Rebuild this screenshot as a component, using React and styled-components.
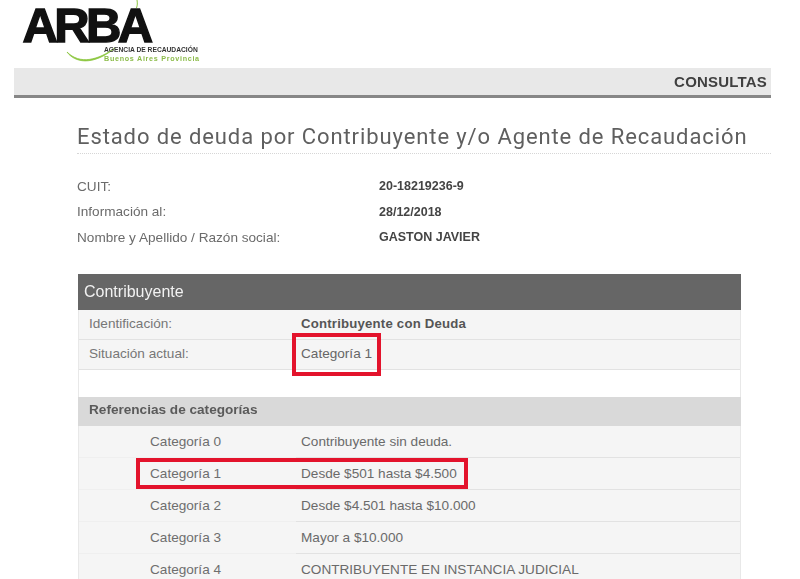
import styled, { createGlobalStyle } from 'styled-components'

const GlobalStyle = createGlobalStyle`
  html, body {
    margin: 0;
    background: #fff;
    font-family: "Liberation Sans", Arial, sans-serif;
    overflow: hidden;
  }
`

const META = [
  { label: 'CUIT:', value: '20-18219236-9' },
  { label: 'Información al:', value: '28/12/2018' },
  { label: 'Nombre y Apellido / Razón social:', value: 'GASTON JAVIER' },
]

const CATEGORIES = [
  { name: 'Categoría 0', text: 'Contribuyente sin deuda.' },
  { name: 'Categoría 1', text: 'Desde $501 hasta $4.500', marked: true },
  { name: 'Categoría 2', text: 'Desde $4.501 hasta $10.000' },
  { name: 'Categoría 3', text: 'Mayor a $10.000' },
  { name: 'Categoría 4', text: 'CONTRIBUYENTE EN INSTANCIA JUDICIAL' },
]

function App() {
  return (
    <Page>
      <GlobalStyle />
      <LogoArea>
        <LogoWord>ARBA</LogoWord>
        <Swoosh width="120" height="68" viewBox="0 0 120 68">
          <path d="M109 0 C 109.5 3, 109.5 5, 108.5 8" fill="none" stroke="#8cc63f" strokeWidth="1" />
          <path d="M39 52 C 46 62, 64 67, 87 48 C 70 60, 52 65, 39 52 Z" fill="#8cc63f" stroke="#8cc63f" strokeWidth="0.8" />
        </Swoosh>
        <LogoTag>
          <LogoDark>AGENCIA DE RECAUDACIÓN</LogoDark>
          <LogoGreen>Buenos Aires Provincia</LogoGreen>
        </LogoTag>
      </LogoArea>
      <TopBar>CONSULTAS</TopBar>
      <Content>
        <Title>Estado de deuda por Contribuyente y/o Agente de Recaudación</Title>
        <MetaList>
          {META.map((row) => (
            <MetaRow key={row.label}>
              <MetaLabel>{row.label}</MetaLabel>
              <MetaValue>{row.value}</MetaValue>
            </MetaRow>
          ))}
        </MetaList>
        <Table>
          <TableHead>Contribuyente</TableHead>
          <InfoRow>
            <InfoLabel>Identificación:</InfoLabel>
            <InfoValue $bold>Contribuyente con Deuda</InfoValue>
          </InfoRow>
          <InfoRow>
            <InfoLabel>Situación actual:</InfoLabel>
            <InfoValue>Categoría 1</InfoValue>
            <SituationMark />
          </InfoRow>
          <Spacer />
          <SubHead>Referencias de categorías</SubHead>
          {CATEGORIES.map((cat) => (
            <CategoryRow key={cat.name}>
              <CategoryName>{cat.name}</CategoryName>
              <CategoryText>{cat.text}</CategoryText>
              {cat.marked && <CategoryMark />}
            </CategoryRow>
          ))}
        </Table>
      </Content>
    </Page>
  )
}

export default App

const Page = styled.div`
  width: 800px;
  height: 579px;
  overflow: hidden;
  padding-left: 14px;
  box-sizing: border-box;
  filter: blur(0.45px);
`

const LogoArea = styled.div`
  position: relative;
  height: 68px;
`

const LogoWord = styled.div`
  position: absolute;
  left: 8.5px;
  top: 5px;
  font-size: 49px;
  line-height: 40px;
  font-weight: 700;
  letter-spacing: -3.6px;
  padding-right: 6px;
  color: #111;
  -webkit-text-stroke: 1.4px #111;
`

const Swoosh = styled.svg`
  position: absolute;
  left: 14px;
  top: 0;
`

const LogoTag = styled.div`
  position: absolute;
  left: 90px;
  top: 45.5px;
  display: flex;
  flex-direction: column;
  gap: 2.5px;
  line-height: 7px;
  font-weight: 700;
`

const LogoDark = styled.span`
  font-size: 6.7px;
  color: #333;
  white-space: nowrap;
`

const LogoGreen = styled.span`
  color: #8cbc4a;
  font-size: 7.2px;
  letter-spacing: 0.7px;
  white-space: nowrap;
`

const TopBar = styled.div`
  width: 753px;
  height: 27px;
  padding-right: 4px;
  background: #e8e8e8;
  border-bottom: 3px solid #878787;
  text-align: right;
  font-size: 15px;
  font-weight: 700;
  line-height: 28px;
  color: #3f3f3f;
  letter-spacing: 0.2px;
`

const Content = styled.div`
  padding-left: 63px;
  width: 694px;
`

const Title = styled.h1`
  margin: 26px 0 0;
  padding-bottom: 3px;
  height: 26px;
  font-family: Roboto, sans-serif;
  font-size: 22px;
  line-height: 26px;
  font-weight: 400;
  letter-spacing: 0.9px;
  color: #5f5f5f;
  white-space: nowrap;
  border-bottom: 1px dotted #d6d6d6;
`

const MetaList = styled.div`
  margin-top: 23px;
  display: flex;
  flex-direction: column;
  gap: 7.5px;
`

const MetaRow = styled.div`
  display: grid;
  grid-template-columns: 302px 1fr;
  height: 18px;
  align-items: center;
`

const MetaLabel = styled.span`
  font-size: 13.6px;
  color: #6b6b6b;
`

const MetaValue = styled.span`
  font-size: 12.5px;
  font-weight: 700;
  color: #444;
`

const Table = styled.div`
  margin: 28px 0 0 1px;
  width: 663px;
  box-sizing: border-box;
  border-left: 1px solid #e8e8e8;
  border-right: 1px solid #e8e8e8;
`

const TableHead = styled.div`
  height: 36px;
  line-height: 35px;
  margin: 0 -1px;
  padding-left: 6px;
  background: #666;
  color: #f2f2f2;
  font-size: 16px;
`

const InfoRow = styled.div`
  position: relative;
  display: grid;
  grid-template-columns: 222px 1fr;
  height: 30px;
  padding-bottom: 2px;
  align-items: center;
  box-sizing: border-box;
  background: #f5f5f5;
  border-bottom: 1px solid #e2e2e2;
`

const InfoLabel = styled.span`
  padding-left: 10px;
  font-size: 13.6px;
  color: #777;
`

const InfoValue = styled.span`
  font-size: ${(p) => (p.$bold ? '13.2px' : '13.6px')};
  font-weight: ${(p) => (p.$bold ? 700 : 400)};
  color: ${(p) => (p.$bold ? '#555' : '#666')};
  ${(p) => p.$bold && 'letter-spacing: 0.2px;'}
`

const SituationMark = styled.div`
  position: absolute;
  left: 213px;
  top: -7px;
  width: 89px;
  height: 43px;
  box-sizing: border-box;
  border: 4.5px solid #e3132c;
`

const Spacer = styled.div`
  height: 27px;
  background: #fff;
`

const SubHead = styled.div`
  height: 29px;
  line-height: 26px;
  margin: 0 -1px;
  padding-left: 11px;
  background: #d9d9d9;
  color: #5a5a5a;
  font-size: 13.6px;
  font-weight: 700;
`

const CategoryRow = styled.div`
  position: relative;
  display: grid;
  grid-template-columns: 222px 1fr;
  height: 32px;
  padding-bottom: 2px;
  align-items: center;
  box-sizing: border-box;
  background: #f5f5f5;
  background-image: linear-gradient(#e2e2e2, #e2e2e2), linear-gradient(#efefef, #efefef);
  background-size: calc(100% - 217px) 1px, 217px 1px;
  background-position: right bottom, left bottom;
  background-repeat: no-repeat;
`

const CategoryName = styled.span`
  padding-left: 71px;
  font-size: 13.6px;
  color: #6e6e6e;
`

const CategoryText = styled.span`
  font-size: 13.6px;
  color: #6a6a6a;
`

const CategoryMark = styled.div`
  position: absolute;
  left: 57px;
  top: 0;
  width: 332px;
  height: 31px;
  box-sizing: border-box;
  border: 4.5px solid #e3132c;
`
